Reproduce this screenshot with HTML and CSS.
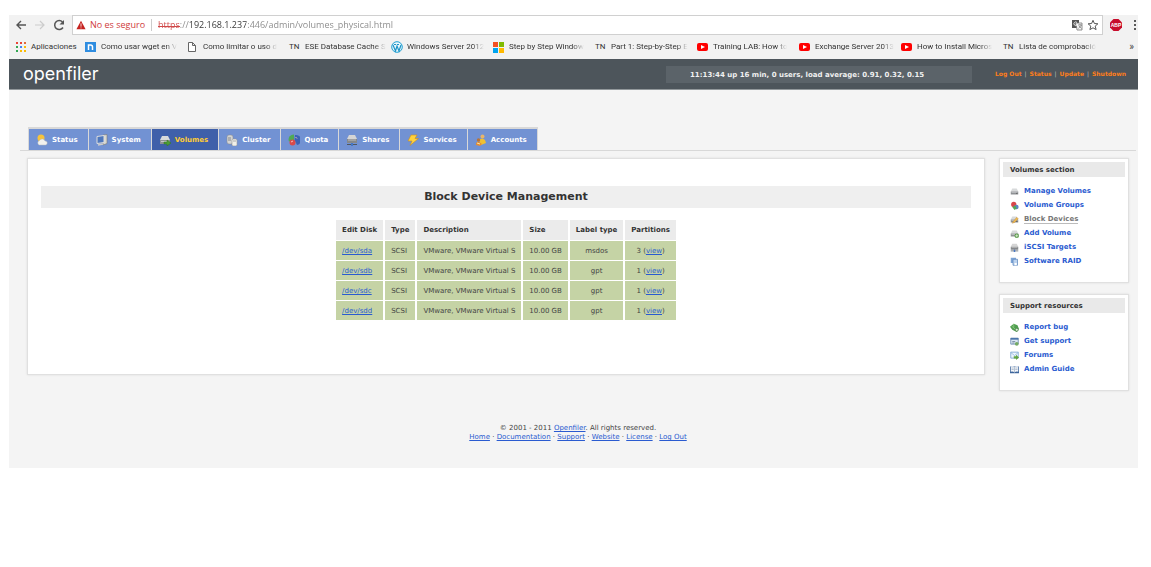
FILE: index.html
```html
<!DOCTYPE html>
<html lang="en">
<head>
<meta charset="utf-8">
<title>Block Device Management</title>
<link rel="stylesheet" href="styles.css">
</head>
<body>
<svg class="defs" aria-hidden="true">
  <symbol id="disk" viewBox="0 0 12 12"><path d="M3 2h6l2 4H1z" fill="#d8dadb"/><path d="M1 6h10v4H1z" fill="#8e9194"/><path d="M2 7h8v1H2z" fill="#c3c6c8"/><path d="M8 8.500h2" stroke="#555"/></symbol>
  <symbol id="plus" viewBox="0 0 12 12"><circle cx="9" cy="9" r="3" fill="#5b9a4a"/><path d="M9 7v4M7 9h4" stroke="#e6f5df"/></symbol>
  <symbol id="arrow" viewBox="0 0 12 12"><path d="M5 8h3V6l4 3-4 3v-2H5z" fill="#4c9c35" stroke="#34761f" stroke-width=".5"/></symbol>
  <symbol id="pie" viewBox="0 0 12 12"><path d="M6 0.500a5 5 0 0 0-5 7L6 6z" fill="#4faa54"/><path d="M7 1a5 5 0 0 1 2 10L6.500 6z" fill="#3b62b5"/><circle cx="4.500" cy="8.500" r="3" fill="#d94a4a"/><path d="M3 8l2-1M7.500 3l1.500 1.500" stroke="#f5c0b8"/></symbol>
  <symbol id="netdisk" viewBox="0 0 12 12"><path d="M3 1h6l2 4H1z" fill="#d5d5d5"/><path d="M1 5h10v4H1z" fill="#85888b"/><path d="M2 6h8" stroke="#bbb"/><path d="M1 10.500h10M6 9v2" stroke="#50565c"/><path d="M5 9h2v3H5z" fill="#4677c4"/></symbol>
  <symbol id="youtube" viewBox="0 0 12 12"><rect x="0" y="2" width="11" height="8" rx="2" fill="#f00"/><path d="M4 4l4 2-4 2z" fill="#fff"/></symbol>
</svg>
<div class="window">
  <div class="toolbar">
    <div class="nav-buttons">
      <button aria-label="Back"><svg viewBox="0 0 12 12"><path d="M11 6H2M6 2L2 6l4 4" fill="none" stroke="#555" stroke-width="1.400"/></svg></button>
      <button aria-label="Forward"><svg viewBox="0 0 12 12"><path d="M1 6h9M6 2l4 4-4 4" fill="none" stroke="#ccc" stroke-width="1.200"/></svg></button>
      <button aria-label="Reload"><svg viewBox="0 0 12 12"><path d="M10 8.500A4.500 4.500 0 1 1 9.500 3" fill="none" stroke="#555" stroke-width="1.500"/><path d="M11 1v4.500H6.500z" fill="#555"/></svg></button>
    </div>
    <div class="omnibox">
      <svg class="warn" viewBox="0 0 12 12" aria-hidden="true"><path d="M6 1l5.500 10H.5z" fill="#c5221f"/><path d="M6 4v4M6 9v1" stroke="#fff"/></svg>
      <label class="insecure" for="address">No es seguro</label>
      <input id="address" class="address" type="text" value="https://192.168.1.237:446/admin/volumes_physical.html">
      <button aria-label="Translate"><svg viewBox="0 0 12 12"><path d="M1 1h7v8H1z" fill="#555"/><path d="M5 4h6v7H6z" fill="#f5f5f5" stroke="#777" stroke-width=".8"/><path d="M6 3.500A1.800 1.800 0 1 0 6 6V5H4.500" fill="none" stroke="#fff" stroke-width=".8"/><path d="M7 6h4M9 5v1M10.500 6L7.500 9.500M8 7l2.500 2.500" fill="none" stroke="#777" stroke-width=".7"/></svg></button>
      <button aria-label="Bookmark this page"><svg viewBox="0 0 12 12"><path d="M6 1.300l1.400 3.200 3.500.3-2.700 2.300.9 3.500L6 8.800l-3.100 1.800.9-3.500L1.100 4.800l3.500-.3z" fill="none" stroke="#555"/></svg></button>
    </div>
    <button class="abp" aria-label="Adblock Plus"><svg viewBox="0 0 12 12"><path d="M3.500 0h5L12 3.500v5L8.500 12h-5L0 8.500v-5z" fill="#c70d2c"/><text x="6" y="8" class="abp-text">ABP</text></svg></button>
    <button class="more" aria-label="Menu"><svg viewBox="0 0 12 12"><path d="M5 1h2v2H5zM5 5h2v2H5zM5 9h2v2H5z" fill="#5a5a5a"/></svg></button>
  </div>
  <nav class="bookmarks" aria-label="Bookmarks">
    <a class="apps" href="#"><svg viewBox="0 0 12 12"><path d="M1 1h2v2H1zM5 1h2v2H5z" fill="#ea4335"/><path d="M9 1h2v2H9z" fill="#e06b3a"/><path d="M1 5h2v2H1z" fill="#34a853"/><path d="M5 5h2v2H5z" fill="#4285f4"/><path d="M9 5h2v2H9zM5 9h2v2H5zM9 9h2v2H9z" fill="#fbbc05"/><path d="M1 9h2v2H1z" fill="#34a853"/></svg><span>Aplicaciones</span></a>
    <a href="#"><svg viewBox="0 0 12 12"><path d="M0 1h11v10H0z" fill="#2f8de0"/><path d="M3.500 9V4h2q2 0 2 2v3" fill="none" stroke="#fff" stroke-width="1.500"/></svg><span>Como usar wget en V</span></a>
    <a href="#"><svg viewBox="0 0 12 12"><path d="M1.500 1.500h4l3 3v6h-7zM5.500 1.500v3h3" fill="#fff" stroke="#666"/></svg><span>Como limitar o uso d</span></a>
    <a href="#"><b>TN</b><span>ESE Database Cache S</span></a>
    <a href="#"><svg viewBox="0 0 12 12"><circle cx="6" cy="6" r="5.300" fill="#e9f7fc" stroke="#1fa0d2"/><path d="M2 4l2.500 6L6 5l2 5 2-6M3 3.500h2M6 3.500h2" fill="none" stroke="#1f95c8" stroke-width="1.200"/></svg><span>Windows Server 2012</span></a>
    <a href="#"><svg viewBox="0 0 12 12"><path d="M0 1h5v5H0z" fill="#f25022"/><path d="M6 1h5v5H6z" fill="#7fba00"/><path d="M0 7h5v5H0z" fill="#00a4ef"/><path d="M6 7h5v5H6z" fill="#ffb900"/></svg><span>Step by Step Window</span></a>
    <a href="#"><b>TN</b><span>Part 1: Step-by-Step E</span></a>
    <a href="#"><svg><use href="#youtube"/></svg><span>Training LAB: How to</span></a>
    <a href="#"><svg><use href="#youtube"/></svg><span>Exchange Server 2013</span></a>
    <a href="#"><svg><use href="#youtube"/></svg><span>How to Install Micros</span></a>
    <a href="#"><b>TN</b><span>Lista de comprobació</span></a>
    <button class="overflow" aria-label="More bookmarks">»</button>
  </nav>
  <header class="header">
    <div class="logo">openfiler</div>
    <div class="uptime">11:13:44 up 16 min, 0 users, load average: 0.91, 0.32, 0.15</div>
    <nav class="session"><a href="#">Log Out</a><i>|</i><a href="#">Status</a><i>|</i><a href="#">Update</a><i>|</i><a href="#">Shutdown</a></nav>
  </header>
  <div class="page">
    <nav class="tabs" aria-label="Sections">
      <a href="#"><svg viewBox="0 0 12 12"><circle cx="5" cy="4" r="3.500" fill="#f6c33c"/><path d="M3 11a2.500 2.500 0 0 1 .5-4.500A3 3 0 0 1 9 7a2 2 0 0 1 .5 4z" fill="#f1f1ee" stroke="#b5b8bd" stroke-width=".5"/></svg>Status</a>
      <a href="#"><svg viewBox="0 0 12 12"><path d="M7 1l4-.5v9L7 11z" fill="#d8d8d0" stroke="#777" stroke-width=".6"/><path d="M1 2.500l7-1v7l-7 1z" fill="#4f78bd" stroke="#ddd"/><path d="M2 11l5-1" stroke="#ccc" stroke-width="1.500"/></svg>System</a>
      <a class="current" href="#" aria-current="page"><svg><use href="#disk"/><use href="#arrow"/></svg>Volumes</a>
      <a href="#"><svg viewBox="0 0 12 12"><rect x="1" y="1" width="6" height="9" rx="2" fill="#d3d5d5" stroke="#888" stroke-width=".5"/><path d="M2 4h3M2 6h3" stroke="#888"/><rect x="6" y="5" width="5" height="7" rx="1.500" fill="#f1f0ea" stroke="#999" stroke-width=".6"/><path d="M7 7h3" stroke="#aaa"/></svg>Cluster</a>
      <a href="#"><svg><use href="#pie"/></svg>Quota</a>
      <a href="#"><svg><use href="#netdisk"/></svg>Shares</a>
      <a href="#"><svg viewBox="0 0 12 12"><path d="M4 1h6L8 4.500h3.500L3 11.500 5 7H1z" fill="#ffd23c" stroke="#c98d24" stroke-width=".6"/></svg>Services</a>
      <a href="#"><svg viewBox="0 0 12 12"><circle cx="7.500" cy="2.500" r="2" fill="#e7b56b"/><path d="M4 6q3-3 6 0l1 3-5 2z" fill="#f0c032"/><circle cx="3.500" cy="6" r="1.700" fill="#b8743a"/><path d="M1 11q0-4 3-3l3 2-2 2z" fill="#e98b2d"/><path d="M2 9l3 1" stroke="#f8e2a0"/></svg>Accounts</a>
    </nav>
    <div class="columns">
      <main class="panel main">
        <h1>Block Device Management</h1>
        <table class="devices">
          <thead><tr><th>Edit Disk</th><th>Type</th><th class="left">Description</th><th class="left">Size</th><th>Label type</th><th>Partitions</th></tr></thead>
          <tbody>
            <tr><td><a href="#">/dev/sda</a></td><td>SCSI</td><td>VMware, VMware Virtual S</td><td>10.00 GB</td><td class="mid">msdos</td><td class="mid">3 (<a href="#">view</a>)</td></tr>
            <tr><td><a href="#">/dev/sdb</a></td><td>SCSI</td><td>VMware, VMware Virtual S</td><td>10.00 GB</td><td class="mid">gpt</td><td class="mid">1 (<a href="#">view</a>)</td></tr>
            <tr><td><a href="#">/dev/sdc</a></td><td>SCSI</td><td>VMware, VMware Virtual S</td><td>10.00 GB</td><td class="mid">gpt</td><td class="mid">1 (<a href="#">view</a>)</td></tr>
            <tr><td><a href="#">/dev/sdd</a></td><td>SCSI</td><td>VMware, VMware Virtual S</td><td>10.00 GB</td><td class="mid">gpt</td><td class="mid">1 (<a href="#">view</a>)</td></tr>
          </tbody>
        </table>
      </main>
      <aside class="sidebar">
        <section class="panel side">
          <h2>Volumes section</h2>
          <ul>
            <li><svg><use href="#disk"/></svg><a href="#">Manage Volumes</a></li>
            <li><svg viewBox="0 0 12 12"><circle cx="5" cy="4.500" r="3.500" fill="#d9474b"/><circle cx="8.500" cy="8" r="3" fill="#5b83c7"/><path d="M3 8l4-2 2 4-3 2z" fill="#55a857"/></svg><a href="#">Volume Groups</a></li>
            <li><svg viewBox="0 0 12 12"><use href="#disk"/><path d="M4 9l5-6 2 2-5 5-3 1z" fill="#f0ba50" stroke="#b98030" stroke-width=".5"/></svg><a class="selected" href="#">Block Devices</a></li>
            <li><svg viewBox="0 0 12 12"><use href="#disk"/><use href="#plus"/></svg><a href="#">Add Volume</a></li>
            <li><svg><use href="#netdisk"/></svg><a href="#">iSCSI Targets</a></li>
            <li><svg viewBox="0 0 12 12"><path d="M1 1h7v7H1z" fill="#7da4d6"/><path d="M4 3h6v8H4z" fill="#bdd3ee" stroke="#5f88bd"/><path d="M6 8h3v3H6z" fill="#fff"/></svg><a href="#">Software RAID</a></li>
          </ul>
        </section>
        <section class="panel side">
          <h2>Support resources</h2>
          <ul>
            <li><svg viewBox="0 0 12 12"><path d="M0 5l5-4 5 2 2 5-3 4-6-3z" fill="#4f9d4f"/><path d="M2 4l6 5M5 1v5" stroke="#95cf86"/><circle cx="9" cy="9" r="2" fill="#ddebd7" stroke="#478244"/></svg><a href="#">Report bug</a></li>
            <li><svg viewBox="0 0 12 12"><path d="M1 1.500h10v8H1z" fill="#dbe7f3" stroke="#5b7fa8"/><path d="M1 2.500h10" stroke="#416da6" stroke-width="2"/><path d="M3 6h4M3 8h3" stroke="#647b94"/><circle cx="9" cy="9" r="2.500" fill="#74aa65"/></svg><a href="#">Get support</a></li>
            <li><svg viewBox="0 0 12 12"><path d="M1 1.500h10v8H1z" fill="#edf5fd" stroke="#6d9ccc"/><path d="M1 2l5 4 5-4" fill="none" stroke="#8eb4da"/><path d="M5 7h3V5l4 3.500L8 12v-2H5z" fill="#62a542"/></svg><a href="#">Forums</a></li>
            <li><svg viewBox="0 0 12 12"><path d="M0 2h12v9H0z" fill="#3c659c"/><path d="M1 2q3-1 5 1 2-2 5-1v7q-3-1-5 1-2-2-5-1z" fill="#f4f6f9"/><path d="M6 3v7M2 4h3M2 6h3M7 4h3M7 6h3" stroke="#8fa3ba" stroke-width=".8"/></svg><a href="#">Admin Guide</a></li>
          </ul>
        </section>
      </aside>
    </div>
    <footer class="footer">
      <div>© 2001 - 2011 <a href="#">Openfiler</a>. All rights reserved.</div>
      <div><a href="#">Home</a> · <a href="#">Documentation</a> · <a href="#">Support</a> · <a href="#">Website</a> · <a href="#">License</a> · <a href="#">Log Out</a></div>
    </footer>
  </div>
</div>
</body>
</html>
```

FILE: styles.css
```css
* { box-sizing: border-box; }
body {
  margin: 0;
  padding: 15px 13px 0 9px;
  background: #fff;
  color: #444;
  font: 7px/8px Verdana, "DejaVu Sans", sans-serif;
}
a { color: #2a5bd0; }
button {
  display: flex;
  padding: 0;
  border: 0;
  background: none;
  color: #444;
  font: inherit;
}
svg { width: 12px; height: 12px; flex: none; }
.defs { position: absolute; width: 0; height: 0; }

/* Browser chrome */
.toolbar, .bookmarks { background: #f2f2f2; }
.toolbar {
  display: flex;
  align-items: center;
  height: 20px;
  font: 9px/12px "Segoe UI", "Open Sans", "Noto Sans", sans-serif;
}
.nav-buttons { display: flex; gap: 7px; padding: 0 7px 0 6px; }
.omnibox {
  flex: 1;
  display: flex;
  align-items: center;
  gap: 4px;
  height: 20px;
  padding: 0 3px;
  border: 1px solid #d0d0d0;
  background: #fff;
}
.warn { width: 10px; height: 10px; }
.insecure { padding-right: 6px; border-right: 1px solid #ccc; color: #cf3b3b; }
.address {
  flex: 1;
  min-width: 0;
  margin-left: 2px;
  padding: 0;
  border: 0;
  outline: 0;
  color: transparent;
  font: inherit;
  background:
    linear-gradient(#d04848, #d04848) 0 7px / 22px 1px no-repeat padding-box,
    linear-gradient(90deg, #d04848 22px, #888 22px 31px, #333 31px 88px, #888 88px) text;
}
.abp { margin: 0 7px; }
.abp-text { fill: #fff; font: bold 5px "Liberation Sans", sans-serif; text-anchor: middle; }
.more { width: 12px; margin-right: -3px; }
.bookmarks {
  display: flex;
  align-items: center;
  gap: 10px;
  height: 24px;
  padding: 0 4px 0 6px;
  font: 8px/12px Roboto, sans-serif;
}
.bookmarks a {
  flex: 0 0 92px;
  display: flex;
  align-items: center;
  gap: 4px;
  min-width: 0;
  color: #333;
  text-decoration: none;
  white-space: nowrap;
}
.bookmarks .apps { flex-basis: 60px; }
.bookmarks b { width: 12px; flex: none; font-weight: 400; }
.bookmarks a:not(.apps) span { mask-image: linear-gradient(90deg, #000 85%, transparent); }
.overflow { margin-left: auto; font-size: 10px; }

/* Application header */
.header {
  display: flex;
  align-items: center;
  height: 31px;
  padding: 0 12px 0 14px;
  background: #4d555b;
  border-bottom: 1px solid #92989b;
}
.logo { flex: 1; color: #fff; font: 18px/20px Inter, sans-serif; }
.uptime {
  flex: 0 0 306px;
  padding: 5px 24px 4px;
  background: #5b6369;
  color: #f0f0f0;
  font-weight: 700;
  white-space: nowrap;
}
.session {
  flex: 0 0 154px;
  display: flex;
  justify-content: flex-end;
  gap: 3px;
  color: #bbb;
  font-size: 6px;
  white-space: nowrap;
}
.session i { font-style: normal; }
.session a { color: #ff7d1a; font-weight: 700; text-decoration: none; }

/* Page */
.page { background: #f4f4f4; padding: 38px 2px 26px 11px; }
.tabs {
  display: flex;
  gap: 1px;
  padding-left: 9px;
  border-bottom: 1px solid #d8d8d8;
}
.tabs a {
  display: flex;
  align-items: center;
  gap: 4px;
  height: 22px;
  padding: 0 10px 0 7px;
  border-top: 1px solid #d8d8d8;
  background: #7292d3;
  box-shadow: 0 0 0 1px #d8d8d8;
  color: #fff;
  font-weight: 700;
  text-decoration: none;
}
.tabs .current { background: #3f60aa; color: #fc3; }
.columns {
  display: flex;
  align-items: flex-start;
  gap: 14px;
  padding: 7px 7px 0;
}
.panel { background: #fff; border: 1px solid #e0e0e0; box-shadow: 0 0 2px #ddd; }
.main { flex: 1; padding: 27px 13px 53px; }
.main h1 {
  margin: 0 0 11px;
  padding: 4px 0;
  background: #efefef;
  color: #333;
  font-size: 11px;
  line-height: 14px;
  text-align: center;
}
.devices { margin: 0 auto; border-spacing: 2px 1px; white-space: nowrap; }
.devices th { height: 20px; padding: 0 6px; background: #ebebeb; color: #333; }
.devices td { height: 19px; padding: 0 6px; background: #c5d3a5; }
.devices .left { text-align: left; }
.devices .mid { text-align: center; }
.sidebar { flex: 0 0 130px; display: grid; gap: 11px; }
.side { padding: 3px 3px 14px; }
.side h2 {
  margin: 0 0 7px;
  padding: 4px 7px 3px;
  background: #e9e9e9;
  color: #333;
  font-size: 7px;
  line-height: 8px;
}
.side ul { margin: 0; padding: 0 7px; list-style: none; }
.side li { display: flex; align-items: center; gap: 5px; height: 14px; }
.side svg { width: 9px; height: 9px; }
.side a { font-weight: 700; text-decoration: none; white-space: nowrap; }
.side .selected { color: #777; border-bottom: 1px solid #bbb; }
.footer { margin-top: 33px; line-height: 9px; text-align: center; }
```
